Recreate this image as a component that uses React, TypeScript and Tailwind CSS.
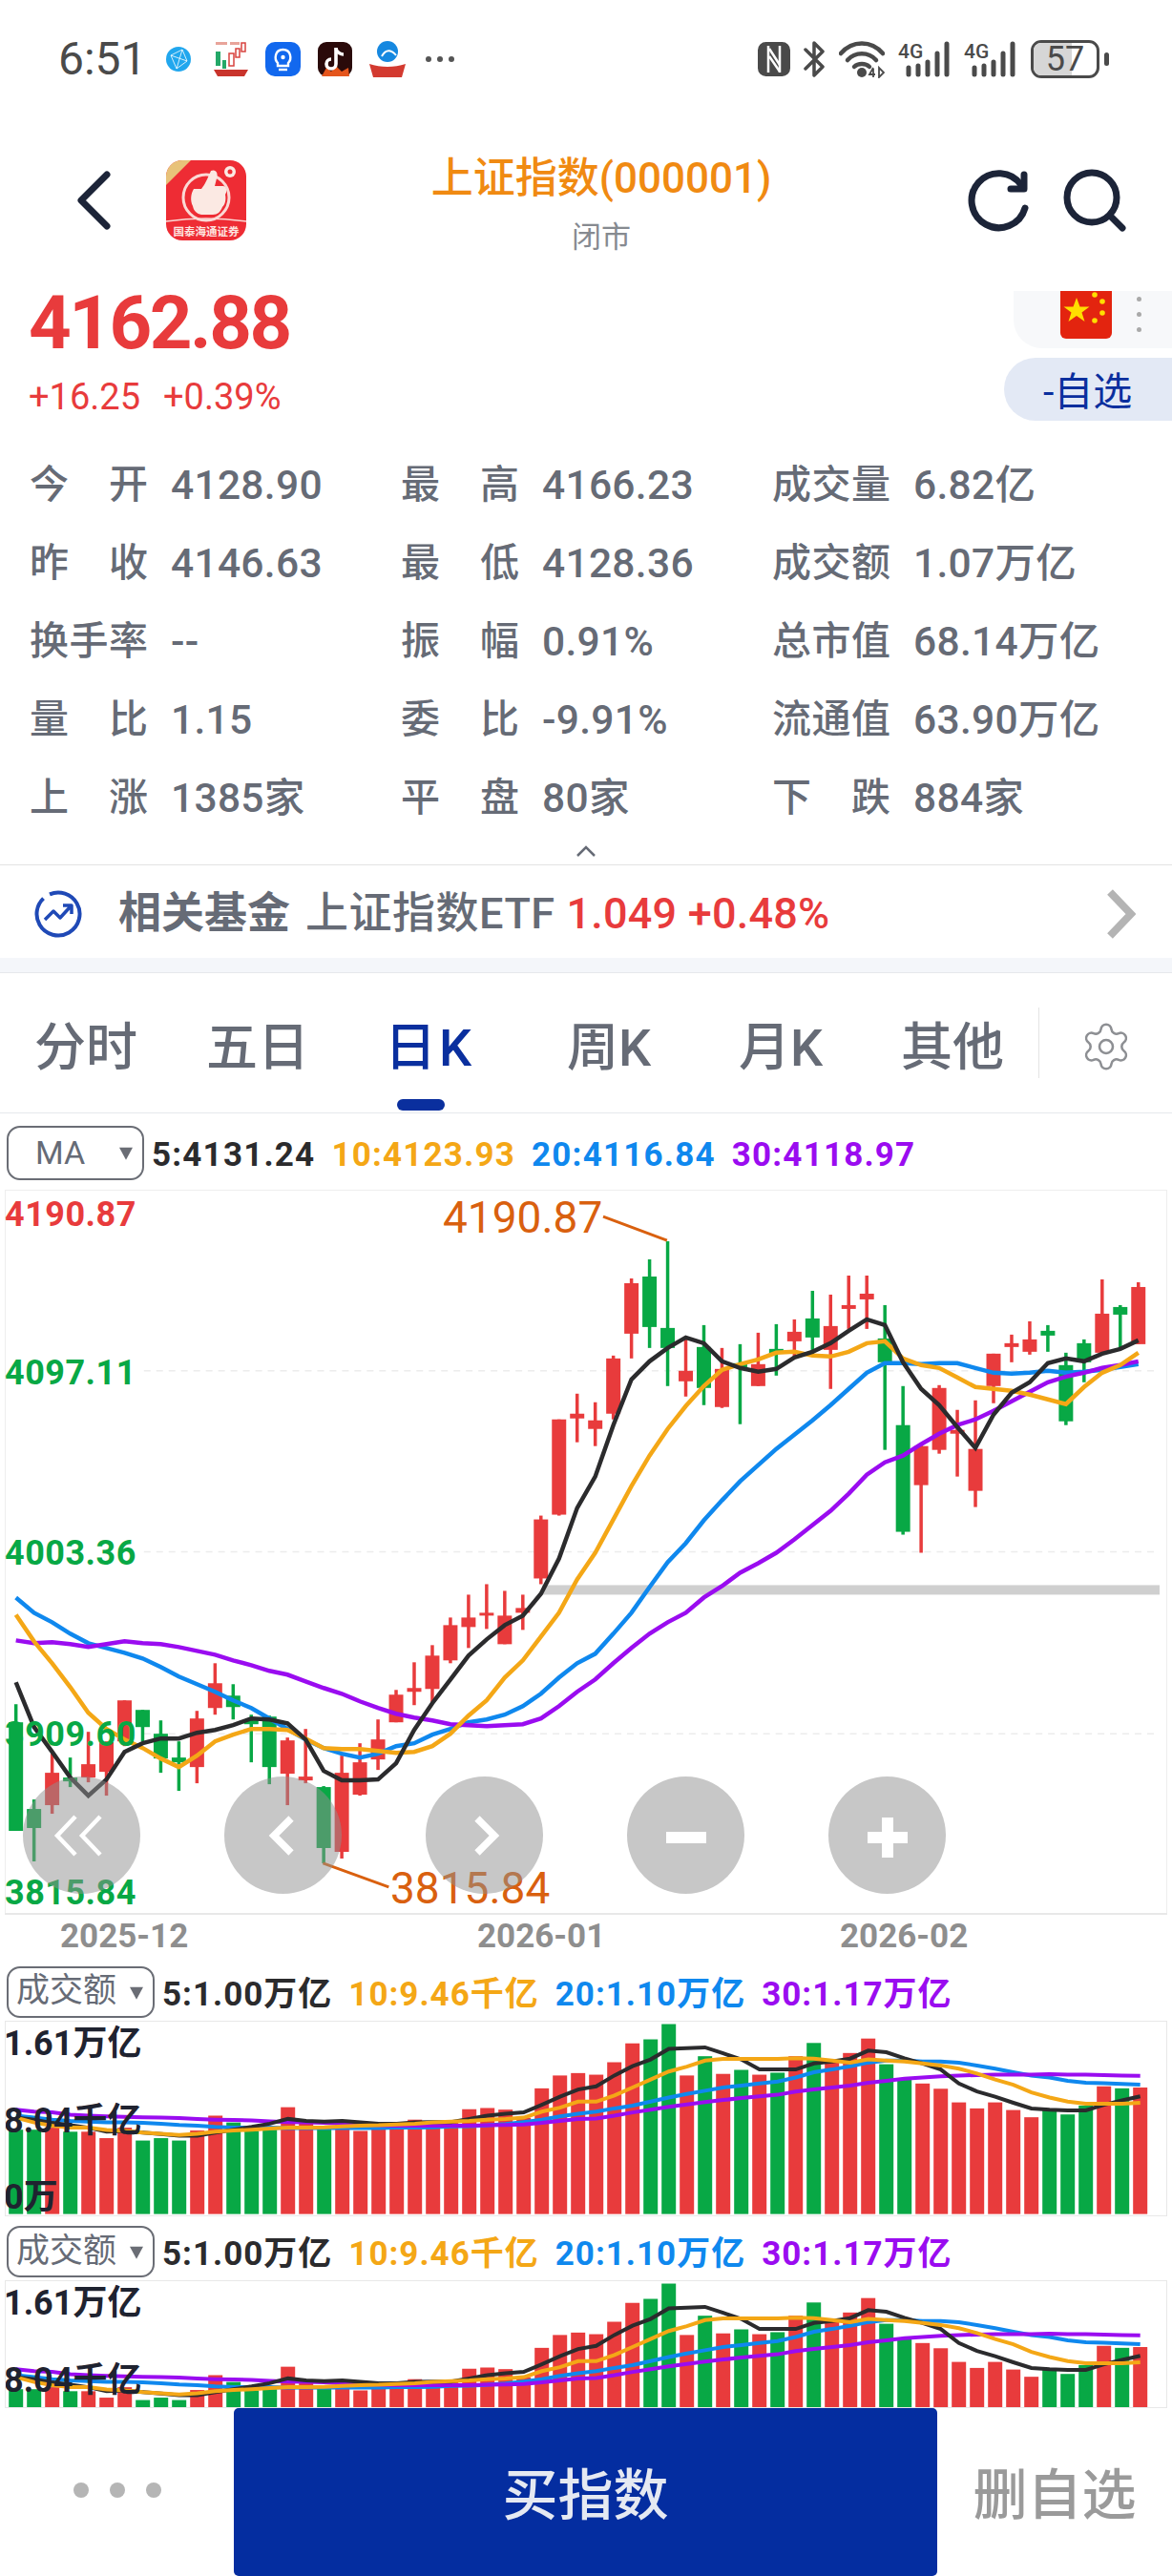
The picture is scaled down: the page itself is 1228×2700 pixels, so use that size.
import { Settings } from "lucide-react";

// candle data in page pixels: [high, bodyTop, bodyBottom, low]
const CANDLES: number[][] = [
  [1786, 1805, 1919, 1919], [1886, 1896, 1916, 1951], [1838, 1858, 1892, 1901], [1842, 1863, 1867, 1873],
  [1815, 1849, 1863, 1868], [1825, 1826, 1857, 1882], [1782, 1782, 1825, 1830], [1792, 1792, 1810, 1825],
  [1803, 1817, 1843, 1858], [1825, 1842, 1847, 1877], [1793, 1801, 1852, 1869], [1743, 1764, 1790, 1797],
  [1765, 1777, 1789, 1802], [1797, 1803, 1807, 1847], [1798, 1799, 1852, 1870], [1821, 1824, 1859, 1892],
  [1812, 1862, 1866, 1869], [1872, 1873, 1937, 1953], [1840, 1858, 1941, 1948], [1827, 1847, 1881, 1882],
  [1802, 1823, 1844, 1855], [1771, 1776, 1805, 1805], [1742, 1769, 1773, 1787], [1724, 1735, 1770, 1785],
  [1695, 1703, 1740, 1743], [1671, 1695, 1705, 1727], [1660, 1690, 1693, 1707], [1667, 1693, 1723, 1723],
  [1671, 1685, 1690, 1708], [1588, 1592, 1654, 1660], [1487, 1487, 1587, 1588], [1460, 1481, 1486, 1511],
  [1469, 1488, 1497, 1515], [1420, 1423, 1481, 1487], [1339, 1344, 1397, 1423], [1319, 1337, 1390, 1412],
  [1300, 1391, 1412, 1452], [1400, 1436, 1447, 1463], [1388, 1411, 1454, 1472], [1412, 1434, 1474, 1475],
  [1408, 1428, 1433, 1492], [1396, 1429, 1452, 1452], [1387, 1413, 1418, 1441], [1382, 1395, 1405, 1423],
  [1352, 1381, 1401, 1418], [1356, 1389, 1414, 1455], [1336, 1367, 1371, 1392], [1336, 1355, 1361, 1392],
  [1367, 1402, 1427, 1519], [1452, 1493, 1605, 1608], [1513, 1515, 1556, 1627], [1451, 1454, 1519, 1523],
  [1477, 1498, 1502, 1547], [1467, 1518, 1562, 1579], [1418, 1418, 1452, 1470], [1398, 1407, 1411, 1427],
  [1384, 1403, 1416, 1419], [1388, 1394, 1399, 1416], [1417, 1430, 1489, 1493], [1403, 1407, 1427, 1448],
  [1340, 1376, 1417, 1417], [1367, 1369, 1377, 1412], [1343, 1348, 1408, 1408],
];

const SIDES = "ggrgrrrgggrrgggrrg" + "rrrrrrrrrrrrrrrrr" + "ggrgrgrgrgrrrgg" + "rrrrrrr" + "gggrgr";

const MA5 = [
  1763, 1810, 1836, 1863, 1882, 1865, 1836, 1827, 1822, 1822, 1816, 1813, 1808, 1801, 1802, 1806, 1823, 1856, 1866, 1866, 1865,
  1848, 1813, 1785, 1760, 1735, 1718, 1703, 1693, 1670, 1633, 1580, 1547, 1493, 1445, 1426, 1412, 1401, 1407, 1426, 1433, 1437,
  1434, 1422, 1416, 1407, 1394, 1382, 1388, 1427, 1455, 1472, 1495, 1517, 1482, 1459, 1448, 1428, 1423, 1426, 1418, 1413, 1404,
];
const MA10 = [
  1692, 1720, 1743, 1768, 1795, 1812, 1823, 1832, 1843, 1852, 1840, 1825, 1818, 1812, 1812, 1813, 1822, 1832, 1833, 1833, 1835,
  1837, 1836, 1830, 1817, 1798, 1782, 1758, 1740, 1715, 1690, 1655, 1627, 1592, 1557, 1525, 1497, 1473, 1452, 1435, 1429, 1424,
  1417, 1416, 1420, 1421, 1416, 1407, 1405, 1423, 1430, 1433, 1443, 1453, 1455, 1457, 1461, 1466, 1471, 1453, 1438, 1430, 1417,
];
const MA20 = [
  1674, 1690, 1700, 1712, 1722, 1727, 1732, 1738, 1747, 1757, 1765, 1773, 1782, 1790, 1801, 1812, 1823, 1832, 1838, 1842, 1838,
  1830, 1827, 1818, 1812, 1805, 1802, 1797, 1788, 1775, 1758, 1743, 1733, 1712, 1690, 1663, 1637, 1617, 1593, 1572, 1552, 1535,
  1518, 1503, 1488, 1472, 1455, 1438, 1428, 1428, 1429, 1428, 1428, 1433, 1438, 1439, 1438, 1436, 1438, 1437, 1435, 1432, 1429,
];
const MA30 = [
  1719, 1722, 1721, 1723, 1726, 1723, 1720, 1722, 1723, 1726, 1730, 1734, 1740, 1745, 1751, 1755, 1762, 1769, 1775, 1783, 1790,
  1796, 1800, 1803, 1807, 1808, 1809, 1808, 1807, 1801, 1788, 1773, 1760, 1743, 1727, 1712, 1700, 1690, 1674, 1662, 1648, 1638,
  1627, 1613, 1598, 1583, 1565, 1545, 1532, 1525, 1513, 1502, 1493, 1487, 1478, 1468, 1458, 1448, 1442, 1438, 1433, 1430, 1426,
];

// turnover panel, measured values; volY() maps them into the panel
const VOL = [
  455, 455, 450, 460, 460, 476, 450, 482, 476, 482, 457, 420, 437, 458, 455, 399, 440, 450, 440, 458, 440, 440, 430, 437, 437, 404,
  401, 405, 425, 352, 320, 314, 318, 287, 240, 230, 192, 320, 272, 316, 306, 318, 313, 272, 239, 285, 264, 228, 292, 330, 340, 353,
  387, 402, 387, 406, 424, 405, 417, 395, 347, 352, 350,
];
const VOL5 = [
  425, 430, 438, 444, 450, 460, 458, 462, 466, 470, 470, 462, 455, 448, 440, 428, 433, 435, 433, 437, 440, 440, 437, 436, 436, 428,
  420, 415, 412, 393, 373, 355, 347, 320, 297, 280, 254, 252, 250, 265, 280, 305, 305, 305, 290, 285, 278, 258, 262, 277, 290, 305,
  340, 360, 373, 388, 402, 405, 407, 407, 393, 382, 372,
];
const VOL10 = [
  425, 437, 445, 450, 450, 456, 458, 462, 465, 468, 465, 460, 457, 455, 452, 450, 450, 449, 447, 445, 444, 442, 440, 437, 435, 433,
  430, 428, 425, 410, 400, 385, 385, 370, 350, 330, 310, 298, 283, 279, 279, 279, 279, 277, 278, 283, 288, 280, 283, 285, 290, 295,
  303, 315, 330, 343, 362, 375, 385, 390, 390, 390, 388,
];
const VOL20 = [
  420, 425, 430, 433, 435, 437, 437, 438, 440, 443, 445, 448, 450, 450, 450, 451, 451, 451, 451, 451, 451, 450, 450, 449, 447, 446,
  444, 441, 436, 430, 422, 415, 410, 402, 395, 385, 375, 366, 358, 350, 345, 340, 335, 325, 312, 305, 297, 288, 283, 283, 285, 285,
  288, 295, 303, 312, 320, 325, 333, 338, 339, 341, 343,
];
const VOL30 = [
  405, 410, 412, 418, 420, 422, 423, 424, 425, 426, 428, 430, 431, 432, 434, 436, 437, 438, 440, 442, 444, 445, 445, 445, 445, 445,
  444, 443, 442, 438, 433, 428, 427, 420, 412, 405, 398, 392, 386, 381, 376, 372, 368, 360, 355, 350, 345, 338, 333, 328, 325, 322,
  320, 319, 318, 318, 318, 317, 318, 318, 319, 320, 321,
];

const RED = "#e83b3c";
const GREEN = "#08a845";
const BLACK = "#2b2b2d";
const ORANGE = "#f4a716";
const BLUE = "#0f88ee";
const PURPLE = "#9a0cf0";

const STATS = [
  [["今", "开"], "4128.90", ["最", "高"], "4166.23", ["成", "交", "量"], "6.82亿"],
  [["昨", "收"], "4146.63", ["最", "低"], "4128.36", ["成", "交", "额"], "1.07万亿"],
  [["换", "手", "率"], "--", ["振", "幅"], "0.91%", ["总", "市", "值"], "68.14万亿"],
  [["量", "比"], "1.15", ["委", "比"], "-9.91%", ["流", "通", "值"], "63.90万亿"],
  [["上", "涨"], "1385家", ["平", "盘"], "80家", ["下", "跌"], "884家"],
] as const;

const candleX = (i: number) => 15.7 + i * 19;
const volY = (v: number) => (v - 186) / 2.376;

function toPoints(values: number[], mapY: (v: number) => number = (v) => v) {
  return values.map((v, i) => `${candleX(i)},${mapY(v).toFixed(1)}`).join(" ");
}

function StatusIcons() {
  return (
    <div className="flex h-[120px] items-center pl-[61px] pr-[66px] pt-[4px] text-[#4a4a4a]">
      <span className="w-[91px] text-[48px] leading-none">6:51</span>
      <svg viewBox="0 0 26 26" className="ml-[22px] h-[26px] w-[26px]">
        <circle cx="13" cy="13" r="13" fill="#21a7ee" />
        <path d="M5 9 L17 3 L22 15 L11 23 Z M5 9 L22 15 M17 3 L11 23" fill="none" stroke="#fff" strokeWidth="1" opacity="0.8" />
      </svg>
      <svg viewBox="0 0 38 38" className="ml-[23px] h-[38px] w-[38px]">
        <rect x="3" y="11" width="5" height="15" fill="#24a868" />
        <rect x="10" y="20" width="4" height="9" fill="#24a868" />
        <rect x="17" y="13" width="5" height="13" fill="none" stroke="#d8433f" strokeWidth="1.5" />
        <rect x="24" y="8" width="4" height="9" fill="none" stroke="#d8433f" strokeWidth="1.5" />
        <rect x="30" y="2" width="4" height="9" fill="none" stroke="#d8433f" strokeWidth="1.5" />
        <path d="M3 1h12v3H3zM18 1h10v3H18z" fill="#e8a49a" />
        <path d="M1 30 H37 L33 37 H5 Z" fill="#c9342c" />
      </svg>
      <svg viewBox="0 0 37 36" className="ml-[17px] h-[36px] w-[37px]">
        <rect width="37" height="36" rx="10" fill="#1268ee" />
        <path d="M13 22 C9 18 10 8 18.500 8 C27 8 28 18 24 22 V25 H13 Z" fill="none" stroke="#fff" strokeWidth="2.400" />
        <path d="M14 29 H23" stroke="#fff" strokeWidth="2.400" />
        <circle cx="18.500" cy="16" r="2.200" fill="#fff" />
      </svg>
      <svg viewBox="0 0 36 36" className="ml-[18px] h-[36px] w-[36px]">
        <rect width="36" height="36" rx="9" fill="#2a0a0a" />
        <path d="M4 36 L9 27 L14 31 L19 25 L25 31 L32 27 L33 36 Z" fill="#e4551c" />
        <path d="M19 6 V23 A5 5 0 1 1 14 18" fill="none" stroke="#fff" strokeWidth="3.600" />
        <path d="M19 7 C20 11 24 13 27 13" fill="none" stroke="#fff" strokeWidth="3.400" />
      </svg>
      <svg viewBox="0 0 38 38" className="ml-[18px] h-[38px] w-[38px]">
        <circle cx="19" cy="11" r="11" fill="#1688e0" />
        <path d="M13 16 C18 7 24 10 28 15" fill="none" stroke="#fff" strokeWidth="2" />
        <path d="M0 24 C12 28 26 28 38 24 L34 38 H4 Z" fill="#d33a30" />
      </svg>
      <div className="ml-[21px] flex gap-[6px]">
        <span className="h-[6px] w-[6px] rounded-full bg-[#555]" />
        <span className="h-[6px] w-[6px] rounded-full bg-[#555]" />
        <span className="h-[6px] w-[6px] rounded-full bg-[#555]" />
      </div>

      <svg viewBox="0 0 34 36" className="ml-auto h-[36px] w-[34px]">
        <rect x="1.500" y="1.500" width="31" height="33" rx="7" fill="#4a4a4a" stroke="#4a4a4a" strokeWidth="3" />
        <path d="M11 4 V32 M23 4 V32" stroke="#fff" strokeWidth="2.500" fill="none" />
        <path d="M12 7 L23 24 M12 15 L23 31" stroke="#fff" strokeWidth="2.500" fill="none" />
      </svg>
      <svg viewBox="0 0 23 38" className="ml-[14px] h-[38px] w-[23px]">
        <path d="M2 9 L20 27 L11 36 V2 L20 11 L2 29" fill="none" stroke="#4a4a4a" strokeWidth="3.500" strokeLinejoin="round" strokeLinecap="round" />
      </svg>
      <svg viewBox="0 0 48 40" className="ml-[14px] h-[40px] w-[48px]">
        <path d="M2 14 C14 0 34 0 46 14" fill="none" stroke="#4a4a4a" strokeWidth="4.500" strokeLinecap="round" />
        <path d="M9 21 C17 12 31 12 39 21" fill="none" stroke="#4a4a4a" strokeWidth="4.500" strokeLinecap="round" />
        <path d="M16 28 C20 24 28 24 32 28" fill="none" stroke="#4a4a4a" strokeWidth="4.500" strokeLinecap="round" />
        <circle cx="24" cy="34" r="5" fill="#4a4a4a" />
        <path d="M36 29 L32 36 H38 M36 30 V39 M42 29 V39 L47 34 Z" fill="none" stroke="#4a4a4a" strokeWidth="1.800" />
      </svg>
      <SignalIcon className="ml-[14px]" />
      <SignalIcon className="ml-[15px]" />
      <div className="relative ml-[16px] flex h-[40px] w-[72px] items-center justify-center overflow-hidden rounded-[11px] border-[3px] border-[#4a4a4a]">
        <div className="absolute inset-y-0 left-0 w-[40px] bg-[#d6d6d6]" />
        <span className="relative text-[36px] leading-none">57</span>
      </div>
      <span className="ml-[5px] h-[14px] w-[5px] rounded-full bg-[#4a4a4a]" />
    </div>
  );
}

function SignalIcon({ className }: { className: string }) {
  return (
    <svg viewBox="0 0 54 38" className={`h-[38px] w-[54px] ${className}`}>
      <text x="0" y="18" fontSize="21" fontWeight="500" fill="#4a4a4a" fontFamily="Roboto">4G</text>
      <path d="M11 28 V35 M21 26 V35 M31 22 V35 M41 13 V35 M51 3 V35" stroke="#4a4a4a" strokeWidth="5" strokeLinecap="round" />
    </svg>
  );
}

function NavBar() {
  return (
    <div className="relative flex h-[185px] items-center pb-[5px]">
      <svg viewBox="0 0 36 62" className="ml-[80px] h-[62px] w-[36px]">
        <path d="M32 4 L5 31 L32 58" fill="none" stroke="#1c2438" strokeWidth="7" strokeLinecap="round" strokeLinejoin="round" />
      </svg>
      <svg viewBox="0 0 84 84" className="ml-[58px] h-[84px] w-[84px]">
        <rect width="84" height="84" rx="17" fill="#ee2c34" />
        <path d="M0 17 A17 17 0 0 1 17 0 H26 L0 26 Z" fill="#e8c27a" />
        <circle cx="42" cy="39" r="24" fill="none" stroke="#fbd9d5" strokeWidth="3" />
        <path d="M29 30 H37 C41 25 43 20 47 11 C52 9 55 13 53 19 L51 27 H60 C64 28 64 33 62 36 C63 41 62 46 59 49 C57 54 54 57 49 57 H37 C32 56 29 53 28 48 C25 42 26 35 29 30 Z" fill="#fbe9e3" />
        <circle cx="67" cy="12" r="6" fill="#fbe9e3" />
        <circle cx="67" cy="12" r="2.500" fill="#ee2c34" />
        <path d="M0 64 C28 60 56 60 84 64" fill="none" stroke="#fbd9d5" strokeWidth="1.500" />
        <text x="42" y="79" textAnchor="middle" fontSize="11.500" fontWeight="700" fill="#fde5e0" fontFamily="'Noto Sans CJK SC'">国泰海通证券</text>
      </svg>
      <div className="absolute left-0 right-0 top-[38px] flex flex-col items-center pl-[32px]">
        <span className="text-[44px] font-medium leading-[58px] text-[#f08a12]">上证指数(000001)</span>
        <span className="mt-[13px] text-[31px] leading-[40px] text-[#868a90]">闭市</span>
      </div>
      <svg viewBox="0 0 66 66" className="ml-auto h-[66px] w-[66px]">
        <path d="M61 41 A28.500 28.500 0 1 1 57 17" fill="none" stroke="#1c2438" strokeWidth="7" strokeLinecap="round" />
        <path d="M60 6 V21 H46" fill="none" stroke="#1c2438" strokeWidth="7" strokeLinejoin="round" strokeLinecap="round" />
      </svg>
      <svg viewBox="0 0 66 66" className="ml-[35px] mr-[48px] h-[66px] w-[66px]">
        <circle cx="30" cy="30" r="26" fill="none" stroke="#1c2438" strokeWidth="7" />
        <path d="M50 50 L62 62" stroke="#1c2438" strokeWidth="7" strokeLinecap="round" />
      </svg>
    </div>
  );
}

function QuoteHead() {
  return (
    <div className="flex h-[162px] items-start justify-between">
      <div className="pl-[30px] text-[#e83b3c]">
        <div className="mt-[-11px] text-[78px] font-bold leading-[90px] tracking-[-2.500px]">4162.88</div>
        <div className="mt-[11px] flex gap-[24px] text-[38px] leading-[42px]">
          <span>+16.25</span>
          <span>+0.39%</span>
        </div>
      </div>
      <div className="flex w-[176px] flex-col items-end">
        <div className="flex h-[60px] w-[166px] items-start rounded-bl-[30px] bg-[#f7f8fa] pl-[49px]">
          <svg viewBox="0 0 54 50" className="h-[50px] w-[54px]">
            <path d="M0 0 H54 V44 A6 6 0 0 1 48 50 H6 A6 6 0 0 1 0 44 Z" fill="#e3240f" />
            <path d="M17 7 L20.500 16.500 L30.500 16.500 L22.500 22.500 L25.500 32 L17 26 L8.500 32 L11.500 22.500 L3.500 16.500 L13.500 16.500 Z" fill="#ffde00" />
            <circle cx="36" cy="4" r="2.800" fill="#ffde00" />
            <circle cx="44" cy="11" r="2.800" fill="#ffde00" />
            <circle cx="44" cy="23" r="2.800" fill="#ffde00" />
            <circle cx="36" cy="31" r="2.800" fill="#ffde00" />
          </svg>
          <div className="ml-[26px] mt-[6px] flex flex-col gap-[11px]">
            <span className="h-[5px] w-[5px] rounded-full bg-[#a9a9a9]" />
            <span className="h-[5px] w-[5px] rounded-full bg-[#a9a9a9]" />
            <span className="h-[5px] w-[5px] rounded-full bg-[#a9a9a9]" />
          </div>
        </div>
        <div className="mt-[10px] flex h-[66px] w-[176px] items-center rounded-l-[33px] bg-[#e3e9f5] pl-[41px] pt-[8px] text-[41px] text-[#0b2f9e]">
          -自选
        </div>
      </div>
    </div>
  );
}

function StatsGrid() {
  return (
    <div className="grid grid-cols-[389px_389px_1fr] pl-[31px] text-[41px] font-medium text-[#666b76]">
      {STATS.flatMap((row, r) =>
        [0, 2, 4].map((c) => (
          <div key={`${r}-${c}`} className="flex h-[82px] items-center pt-[2px]">
            <div className="flex w-[124px] justify-between">
              {(row[c] as readonly string[]).map((ch) => (
                <span key={ch}>{ch}</span>
              ))}
            </div>
            <span className="ml-[24px] text-[42.500px] tracking-[0.300px]">{row[c + 1] as string}</span>
          </div>
        ))
      )}
    </div>
  );
}

function FundRow() {
  return (
    <div className="flex h-[98px] items-center border-t border-[#e3e3e3] pt-[4px]">
      <svg viewBox="0 0 50 50" className="ml-[36px] h-[50px] w-[50px]">
        <circle cx="25" cy="25" r="22.500" fill="none" stroke="#1f49b6" strokeWidth="4" strokeDasharray="100 8" transform="rotate(-30 25 25)" />
        <path d="M11 31 L20 22 L27 29 L38 17 M30 16 H39 V25" fill="none" stroke="#1f49b6" strokeWidth="3.500" strokeLinejoin="round" />
      </svg>
      <span className="ml-[38px] text-[45px] font-bold text-[#666b76]">相关基金</span>
      <span className="ml-[16px] text-[45px] font-medium tracking-[0.500px] text-[#666b76]">上证指数ETF</span>
      <span className="ml-[12px] text-[45px] font-medium tracking-[0.200px] text-[#e83b3c]">1.049 +0.48%</span>
      <svg viewBox="0 0 32 52" className="ml-auto mr-[38px] h-[52px] w-[32px]">
        <path d="M5 3 L27 26 L5 49" fill="none" stroke="#b4b4b4" strokeWidth="8" />
      </svg>
    </div>
  );
}

function Tabs() {
  const tabs = ["分时", "五日", "日K", "周K", "月K", "其他"];
  return (
    <div className="flex h-[148px] border-y border-[#e6e8ec]">
      <div className="flex w-[1088px]">
        {tabs.map((t) => (
          <div
            key={t}
            className={`relative flex flex-1 items-center justify-center pt-[10px] text-[54px] font-medium ${t === "日K" ? "pr-[8px] tracking-[3px] text-[#0a2f9e]" : "text-[#666b76]"}`}
          >
            {t}
            {t === "日K" && <span className="absolute bottom-[2px] left-[-26px] right-0 mx-auto h-[12px] w-[50px] rounded-full bg-[#0a2f9e]" />}
          </div>
        ))}
      </div>
      <div className="my-[36px] flex flex-1 items-center border-l border-[#e4e4e4] pl-[42px] pt-[8px]">
        <Settings size={56} strokeWidth={1.1} color="#8d8f93" />
      </div>
    </div>
  );
}

function Legend({ box, boxClass, items, itemClass }: { box: string; boxClass: string; items: string[]; itemClass: string }) {
  const colors = [BLACK, ORANGE, BLUE, PURPLE];
  return (
    <div className="flex items-center gap-[17px] pl-[7px]">
      <div className={`relative mr-[-9px] flex shrink-0 items-center rounded-[14px] border-2 border-[#6a6d75] text-[#666b76] ${boxClass}`}>
        {box}
        <span className="absolute right-[10px] top-[50%] h-0 w-0 translate-y-[-40%] border-x-[7px] border-t-[13px] border-x-transparent border-t-[#6a6d75]" />
      </div>
      {items.map((item, i) => (
        <span key={item} className={`whitespace-nowrap pt-[7px] font-bold ${itemClass}`} style={{ color: colors[i] }}>
          {item}
        </span>
      ))}
    </div>
  );
}

function AxisLabel({ className, children }: { className: string; children: string }) {
  return <span className={`absolute left-[-1px] whitespace-nowrap text-[36px] font-bold leading-[40px] tracking-[0.5px] ${className}`}>{children}</span>;
}

function NavDisc({ children }: { children: React.ReactNode }) {
  return (
    <div className="flex h-[123px] w-[123px] items-center justify-center rounded-full bg-[#8f8f8f]/50">
      <svg viewBox="0 0 60 60" className="h-[60px] w-[60px]" fill="none" stroke="#fff">
        {children}
      </svg>
    </div>
  );
}

function KChart() {
  return (
    <div className="relative mx-[5px] h-[758px] border-x border-t border-[#eeeeee]">
      <svg viewBox="5 1247 1218 758" className="absolute inset-0 h-[757px] w-[1216px]" fill="none">
        <path d="M150 1436 H1216 M150 1626 H1216 M150 1817 H1216" stroke="#ececec" strokeWidth="1.500" strokeDasharray="7 6" />
        <rect x="568" y="1661" width="648" height="10" fill="#cfcfcf" />
        {CANDLES.map(([high, top, bottom, low], i) => {
          const x = candleX(i);
          const fill = SIDES[i] === "r" ? RED : GREEN;
          return (
            <g key={i} fill={fill}>
              <rect x={x - 1.75} y={high} width="3.5" height={low - high} />
              <rect x={x - 7.5} y={top} width="15" height={bottom - top} />
            </g>
          );
        })}
        <polyline points={toPoints(MA20)} stroke={BLUE} strokeWidth="4.500" />
        <polyline points={toPoints(MA30)} stroke={PURPLE} strokeWidth="4.500" />
        <polyline points={toPoints(MA10)} stroke={ORANGE} strokeWidth="4.500" />
        <polyline points={toPoints(MA5)} stroke={BLACK} strokeWidth="4.500" />
        <path d="M632 1274 L699 1299 M338 1953 L407 1978" stroke="#d9600f" strokeWidth="3" />
      </svg>
      <AxisLabel className="top-[5px] text-[#e83b3c]">4190.87</AxisLabel>
      <AxisLabel className="top-[171px] text-[#08a845]">4097.11</AxisLabel>
      <AxisLabel className="top-[360px] text-[#08a845]">4003.36</AxisLabel>
      <AxisLabel className="top-[550px] text-[#08a845]">3909.60</AxisLabel>
      <AxisLabel className="top-[716px] text-[#08a845]">3815.84</AxisLabel>
      <span className="absolute left-[458px] top-[5px] text-[46px] leading-[46px] text-[#d9600f]">4190.87</span>
      <span className="absolute left-[403px] top-[708px] text-[46px] leading-[46px] text-[#d9600f]">3815.84</span>
      <div className="absolute left-[18px] top-[614px] flex gap-[88px]">
        <NavDisc>
          <path d="M23 10 L4 30 L23 50 M49 10 L30 30 L49 50" strokeWidth="4.500" />
        </NavDisc>
        <NavDisc>
          <path d="M38 12 L20 30 L38 48" strokeWidth="7.500" />
        </NavDisc>
        <NavDisc>
          <path d="M22 12 L40 30 L22 48" strokeWidth="7.500" />
        </NavDisc>
        <NavDisc>
          <path d="M9 32 H51" strokeWidth="12" />
        </NavDisc>
        <NavDisc>
          <path d="M9 32 H51 M30 11 V53" strokeWidth="12" />
        </NavDisc>
      </div>
    </div>
  );
}

function DateAxis() {
  return (
    <div className="relative mx-[5px] h-[45px] border-t-2 border-[#e8e8e8]">
      <span className="absolute left-[58px] top-[2px] text-[35px] font-bold leading-[42px] text-[#8e8e8e]">2025-12</span>
      <span className="absolute left-[495px] top-[2px] text-[35px] font-bold leading-[42px] text-[#8e8e8e]">2026-01</span>
      <span className="absolute left-[875px] top-[2px] text-[35px] font-bold leading-[42px] text-[#8e8e8e]">2026-02</span>
    </div>
  );
}

function VolumeChart({ height, showZero }: { height: string; showZero: boolean }) {
  return (
    <div className={`relative mx-[5px] overflow-hidden border border-[#e8e8e8] ${height}`}>
      <svg viewBox="0 0 1218 205" className="absolute left-[-5px] top-0 h-[205px] w-[1218px]" fill="none">
        {VOL.map((v, i) => (
          <rect key={i} x={candleX(i) - 7.5} y={volY(v)} width="15" height={201.6 - volY(v)} fill={SIDES[i] === "r" ? RED : GREEN} />
        ))}
        <polyline points={toPoints(VOL20, volY)} stroke={BLUE} strokeWidth="4" />
        <polyline points={toPoints(VOL30, volY)} stroke={PURPLE} strokeWidth="4" />
        <polyline points={toPoints(VOL5, volY)} stroke={BLACK} strokeWidth="4" />
        <polyline points={toPoints(VOL10, volY)} stroke={ORANGE} strokeWidth="4" />
      </svg>
      <span className="absolute left-[-2px] top-[3px] text-[36px] font-bold leading-[40px] text-[#1f2330]">1.61万亿</span>
      <span className="absolute left-[-2px] top-[84px] text-[36px] font-bold leading-[40px] text-[#1f2330]">8.04千亿</span>
      {showZero && <span className="absolute left-[-2px] top-[164px] text-[36px] font-bold leading-[40px] text-[#1f2330]">0万</span>}
    </div>
  );
}

const TURNOVER = ["5:1.00万亿", "10:9.46千亿", "20:1.10万亿", "30:1.17万亿"];

export default function App() {
  return (
    <div className="h-[2700px] w-[1228px] overflow-hidden bg-white font-['Roboto','Noto_Sans_CJK_SC',sans-serif]">
      <div className="h-[2524px] overflow-hidden">
        <StatusIcons />
        <NavBar />
        <QuoteHead />
        <StatsGrid />
        <div className="flex h-[29px] items-center justify-center">
          <svg viewBox="0 0 22 14" className="h-[14px] w-[22px]">
            <path d="M2 12 L11 3 L20 12" fill="none" stroke="#666b76" strokeWidth="2.500" />
          </svg>
        </div>
        <FundRow />
        <div className="h-[15px] bg-[#f4f6fa]" />
        <Tabs />
        <div className="flex h-[80px] items-center pt-[2px]">
          <Legend
            box="MA"
            boxClass="h-[57px] w-[144px] pl-[28px] text-[34px]"
            items={["5:4131.24", "10:4123.93", "20:4116.84", "30:4118.97"]}
            itemClass="text-[35px] tracking-[1.200px]"
          />
        </div>
        <KChart />
        <DateAxis />
        <div className="flex h-[68px] items-center pt-[7px]">
          <Legend box="成交额" boxClass="h-[54px] w-[155px] pl-[8px] text-[35px]" items={TURNOVER} itemClass="text-[35px] tracking-[1px]" />
        </div>
        <VolumeChart height="h-[205px]" showZero />
        <div className="flex h-[67px] items-center pt-[7px]">
          <Legend box="成交额" boxClass="h-[54px] w-[155px] pl-[8px] text-[35px]" items={TURNOVER} itemClass="text-[35px] tracking-[1px]" />
        </div>
        <VolumeChart height="h-[134px]" showZero={false} />
      </div>
      <div className="flex h-[176px] items-stretch">
        <div className="flex w-[245px] items-center justify-center gap-[22px] pb-[4px]">
          <span className="h-[16px] w-[16px] rounded-full bg-[#b5b5b5]" />
          <span className="h-[16px] w-[16px] rounded-full bg-[#b5b5b5]" />
          <span className="h-[16px] w-[16px] rounded-full bg-[#b5b5b5]" />
        </div>
        <div className="flex w-[737px] items-center justify-center rounded-[5px] bg-[#042da0] pt-[8px] text-[58px] font-medium text-[#e5e9f2]">买指数</div>
        <div className="flex flex-1 items-center justify-center pt-[8px] text-[57px] font-medium text-[#9a9a9a]">删自选</div>
      </div>
    </div>
  );
}
